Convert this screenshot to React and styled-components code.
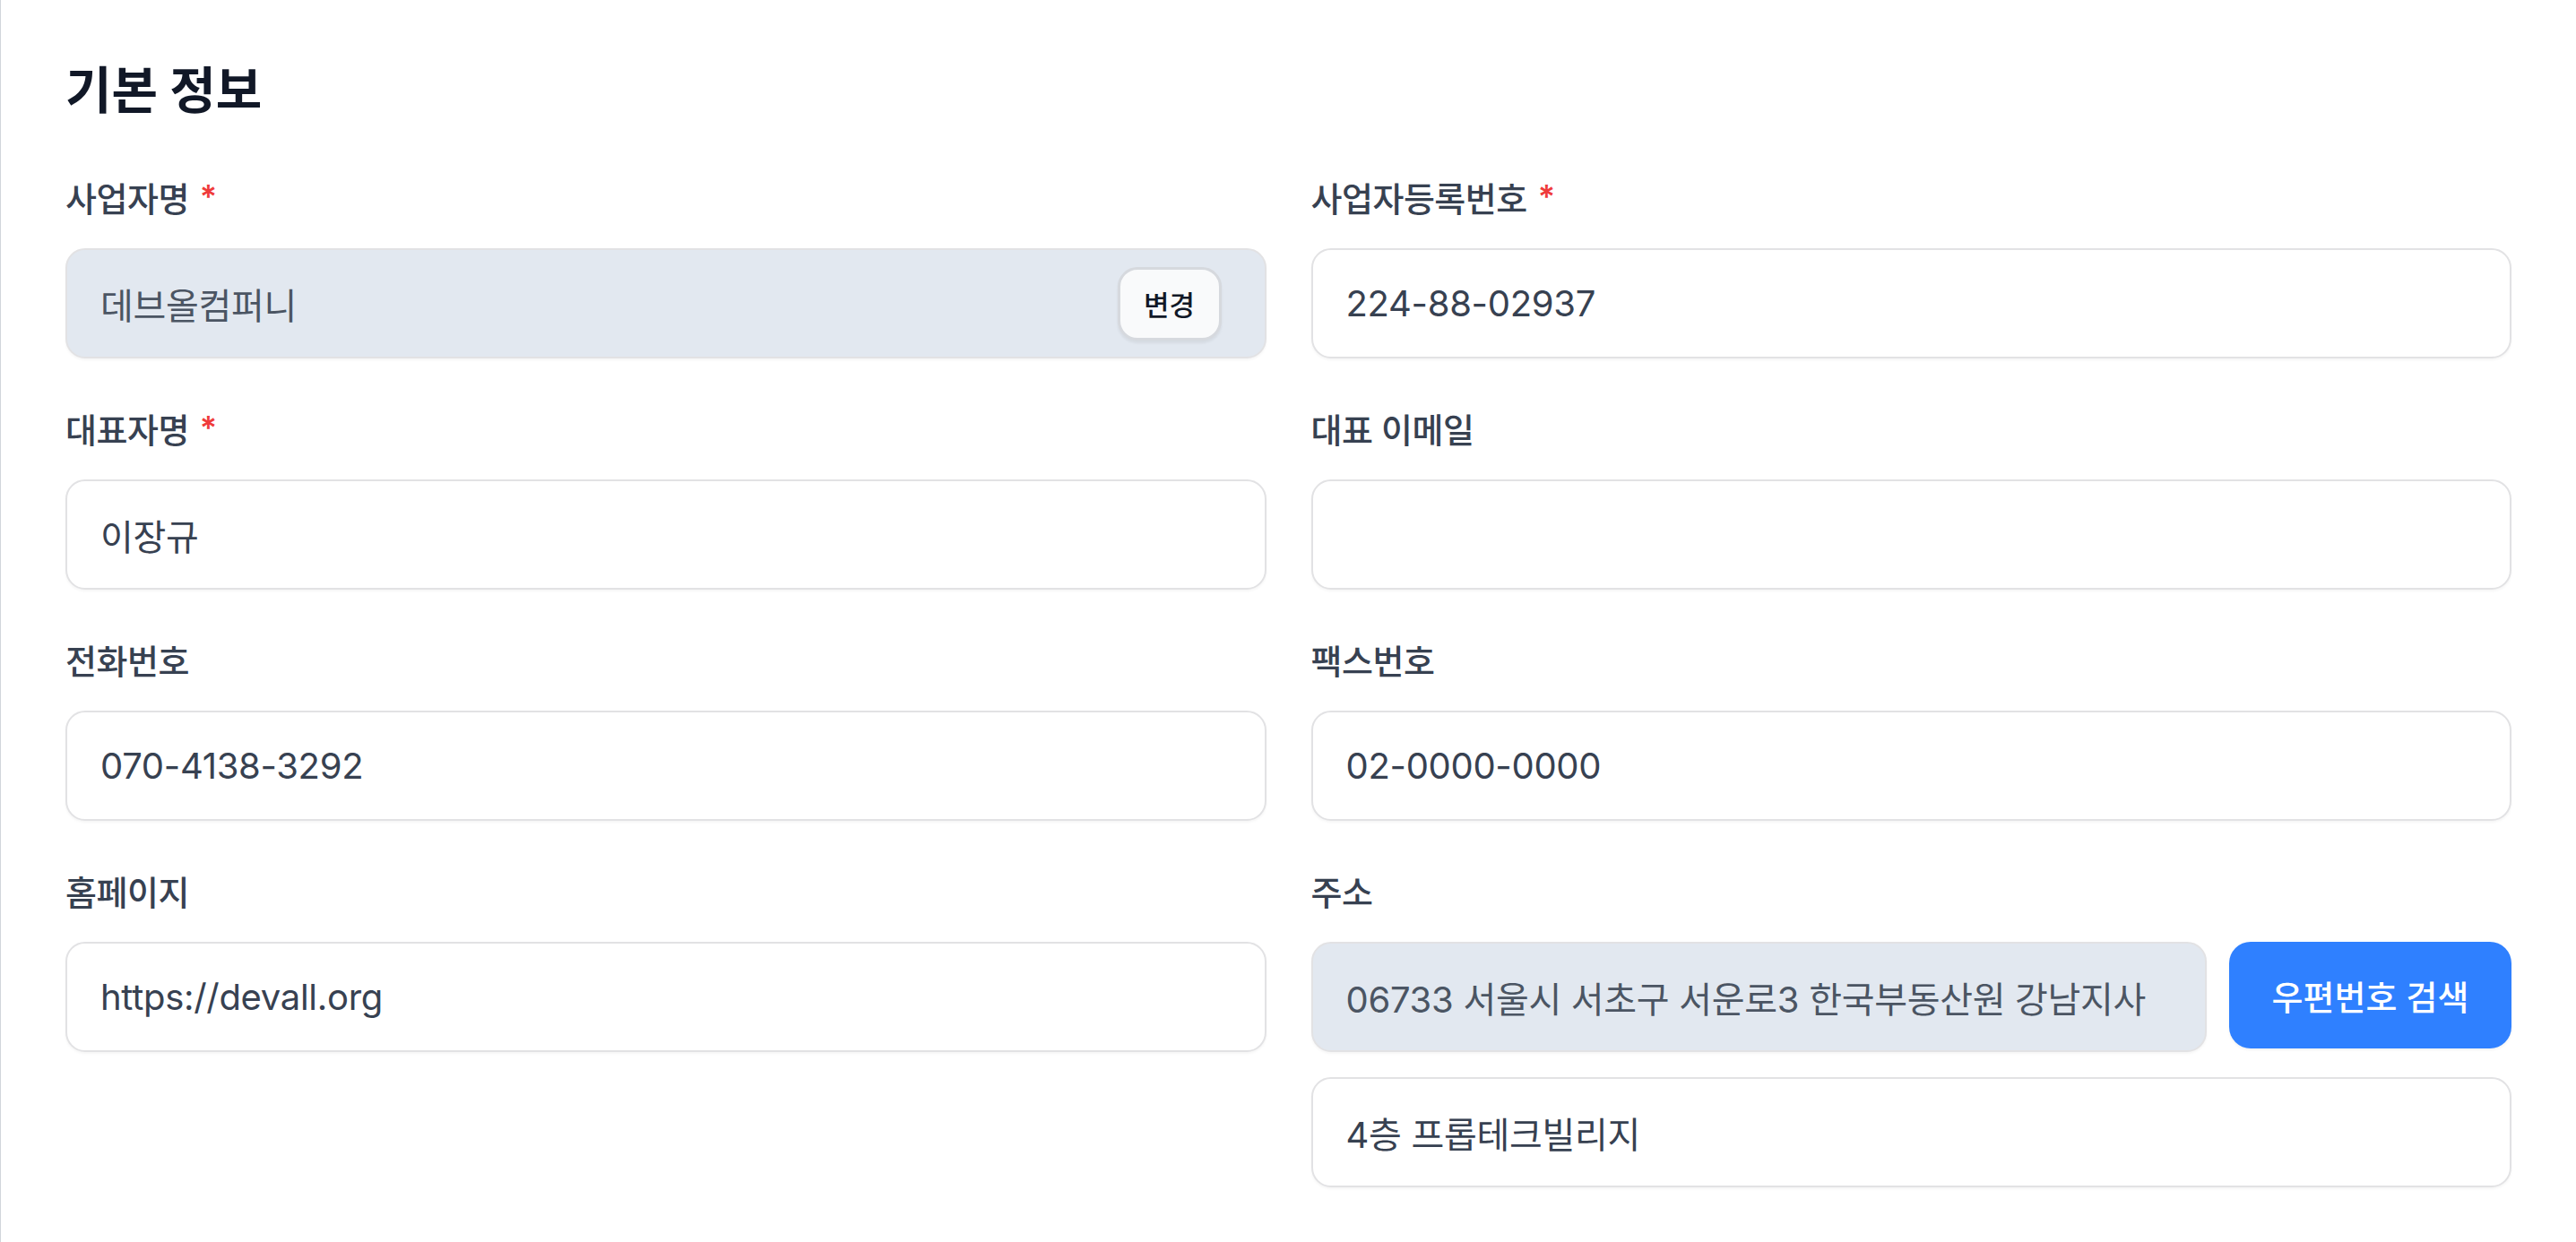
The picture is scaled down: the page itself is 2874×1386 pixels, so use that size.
import React from 'react';
import styled, { createGlobalStyle } from 'styled-components';

const GlobalStyle = createGlobalStyle`
	html, body {
		margin: 0;
		padding: 0;
		background: #ffffff;
	}
	body {
		font-family: "Inter", "Noto Sans CJK KR", sans-serif;
		color: #374151;
	}
	* {
		box-sizing: border-box;
	}
`

const Page = styled.section`
	min-height: 1386px;
	border-left: 1px solid #d1d5db;
	padding: 64px 72px 60px 72px;
`

const Title = styled.h2`
	margin: 0 0 58px;
	font-size: 56px;
	line-height: 74px;
	font-weight: 700;
	color: #111827;
`

const Grid = styled.div`
	display: grid;
	grid-template-columns: 1fr 1fr;
	column-gap: 50px;
	row-gap: 54px;
`

const Field = styled.div`
	display: flex;
	flex-direction: column;
	gap: 29px;
`

const Label = styled.label`
	display: flex;
	align-items: flex-start;
	gap: 12px;
	font-size: 38px;
	line-height: 52px;
	font-weight: 500;
	color: #374151;
	letter-spacing: -0.5px;
`

const Required = styled.span`
	color: #ef3b3b;
	font-size: 36px;
	line-height: 46px;
	font-weight: 600;
`

const InputBox = styled.div`
	display: flex;
	align-items: center;
	height: 123px;
	padding: 0 37px;
	border: 2px solid #e2e2e4;
	border-radius: 22px;
	background: ${p => (p.$readOnly ? '#e2e8f0' : '#ffffff')};
	box-shadow: 0 2px 3px rgba(0, 0, 0, 0.04);
`

const AddressBox = styled(InputBox)`
	flex: 1;
	min-width: 0;
`

const Input = styled.input`
	flex: 1;
	min-width: 0;
	border: 0;
	outline: none;
	background: transparent;
	padding: 0;
	font-family: inherit;
	font-size: 40px;
	letter-spacing: -0.3px;
	color: ${p => (p.readOnly ? '#4b5563' : '#374151')};
`

const SmallButton = styled.button`
	flex: none;
	width: 116px;
	height: 82px;
	margin-right: 11px;
	border: 3px solid #d6d9de;
	border-radius: 22px;
	background: #f9fafb;
	box-shadow: 0 3px 3px rgba(0, 0, 0, 0.06);
	font-family: inherit;
	font-size: 31px;
	font-weight: 500;
	color: #111827;
	cursor: pointer;
`

const AddressStack = styled.div`
	display: flex;
	flex-direction: column;
	gap: 28px;
`

const AddressRow = styled.div`
	display: flex;
	align-items: flex-start;
	gap: 25px;
`

const PrimaryButton = styled.button`
	flex: none;
	width: 315px;
	height: 119px;
	border: 0;
	border-radius: 24px;
	background: #2f80ff;
	box-shadow: 0 2px 3px rgba(0, 0, 0, 0.05);
	font-family: inherit;
	font-size: 38px;
	font-weight: 500;
	color: #ffffff;
	cursor: pointer;
`

function FieldLabel({ children, required }) {
	return (
		<Label>
			{children}
			{required && <Required>*</Required>}
		</Label>
	);
}

function TextField({ label, required, value, readOnly }) {
	return (
		<Field>
			<FieldLabel required={required}>{label}</FieldLabel>
			<InputBox $readOnly={readOnly}>
				<Input readOnly={readOnly} defaultValue={value} />
			</InputBox>
		</Field>
	);
}

export default function App() {
	return (
		<Page>
			<GlobalStyle />
			<Title>기본 정보</Title>
			<Grid>
				<Field>
					<FieldLabel required>사업자명</FieldLabel>
					<InputBox $readOnly>
						<Input readOnly defaultValue="데브올컴퍼니" />
						<SmallButton type="button">변경</SmallButton>
					</InputBox>
				</Field>
				<TextField label="사업자등록번호" required value="224-88-02937" />
				<TextField label="대표자명" required value="이장규" />
				<TextField label="대표 이메일" value="" />
				<TextField label="전화번호" value="070-4138-3292" />
				<TextField label="팩스번호" value="02-0000-0000" />
				<TextField label="홈페이지" value="https://devall.org" />
				<Field>
					<FieldLabel>주소</FieldLabel>
					<AddressStack>
						<AddressRow>
							<AddressBox $readOnly>
								<Input readOnly defaultValue="06733 서울시 서초구 서운로3 한국부동산원 강남지사" />
							</AddressBox>
							<PrimaryButton type="button">우편번호 검색</PrimaryButton>
						</AddressRow>
						<InputBox>
							<Input defaultValue="4층 프롭테크빌리지" />
						</InputBox>
					</AddressStack>
				</Field>
			</Grid>
		</Page>
	);
}
